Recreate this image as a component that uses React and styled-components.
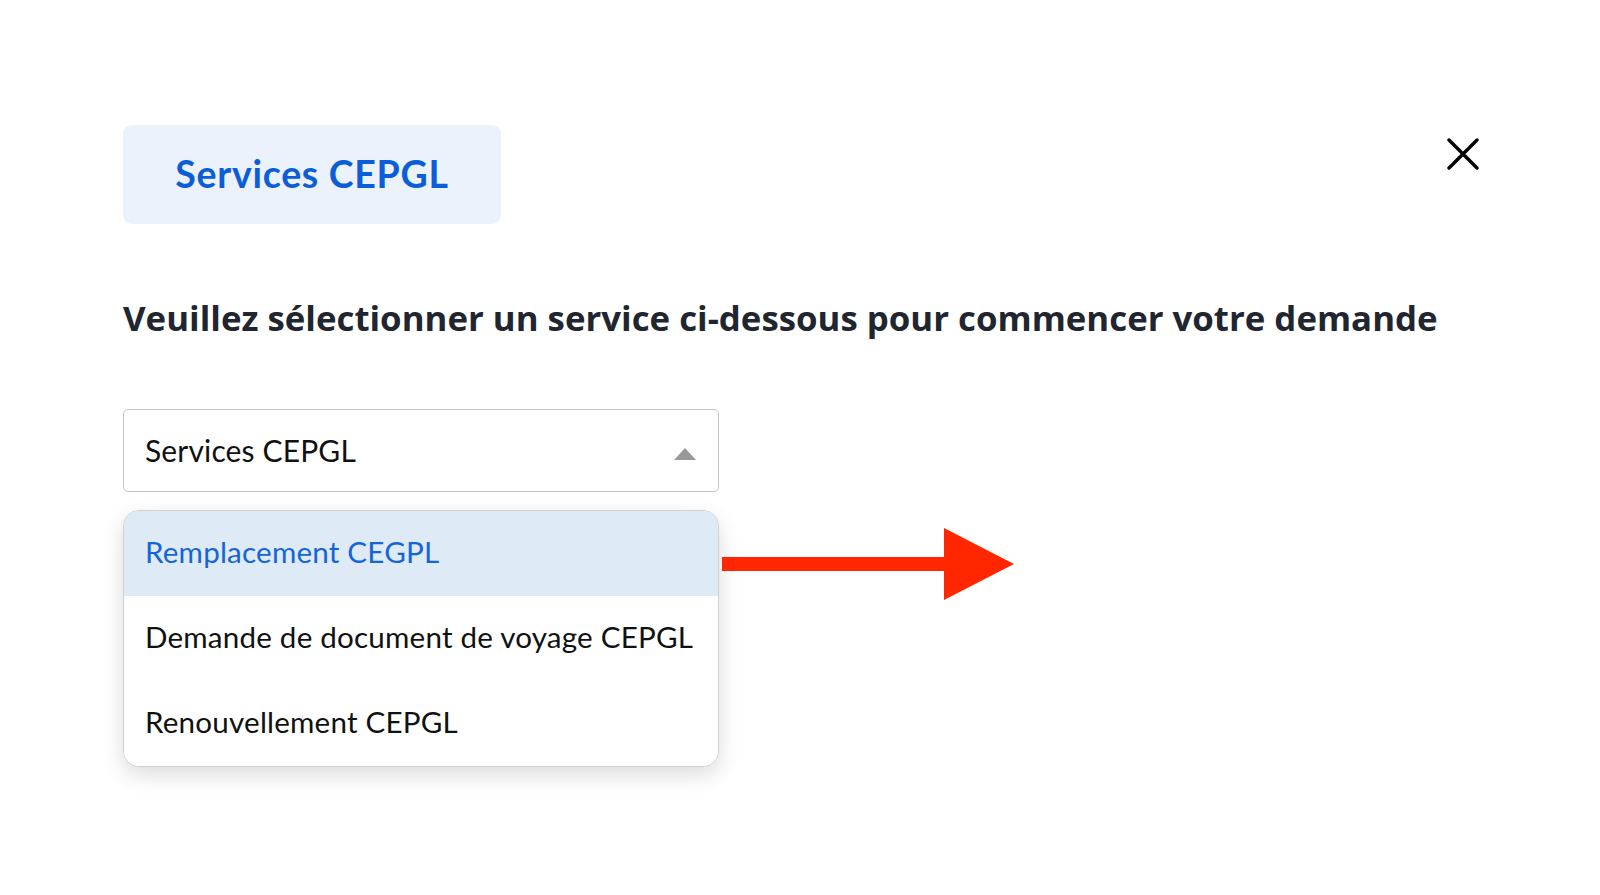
import React from 'react';
import styled, { createGlobalStyle } from 'styled-components';

const GlobalStyle = createGlobalStyle`
  html, body {
    margin: 0;
    padding: 0;
    background: #ffffff;
    font-family: Lato, "Open Sans", sans-serif;
  }
`;

const options = [
  { label: 'Remplacement CEGPL', active: true },
  { label: 'Demande de document de voyage CEPGL' },
  { label: 'Renouvellement CEPGL' },
];

const App = () => {
  return (
    <Page>
      <GlobalStyle />
      <Header>
        <Badge>Services CEPGL</Badge>
        <CloseButton aria-label="close">
          <svg width="32" height="32" viewBox="0 0 32 32">
            <path d="M2 2 L30 30 M30 2 L2 30" stroke="#000" strokeWidth="3.4" strokeLinecap="round" />
          </svg>
        </CloseButton>
      </Header>

      <Title>Veuillez sélectionner un service ci-dessous pour commencer votre demande</Title>

      <Select>
        <span>Services CEPGL</span>
        <Caret />
      </Select>

      <MenuRow>
        <Menu>
          {options.map((opt, index) => (
            <Option key={index} $active={opt.active}>
              {opt.label}
            </Option>
          ))}
        </Menu>
        <Arrow width="292" height="72" viewBox="0 0 292 72">
          <rect x="0" y="29" width="224" height="14" fill="#ff2600" />
          <polygon points="222,0 292,36 222,72" fill="#ff2600" />
        </Arrow>
      </MenuRow>
    </Page>
  );
};

export default App;

const Page = styled.div`
  width: 1600px;
  height: 895px;
  box-sizing: border-box;
  padding: 125px 121px 0 123px;
  overflow: hidden;
`;

const Header = styled.div`
  display: flex;
  justify-content: space-between;
  align-items: flex-start;
`;

const Badge = styled.div`
  width: 378px;
  height: 99px;
  box-sizing: border-box;
  padding-bottom: 3px;
  display: flex;
  align-items: center;
  justify-content: center;
  background: #ebf2fc;
  border-radius: 9px;
  color: #0b5ed7;
  font-size: 37.5px;
  font-weight: 700;
  letter-spacing: 0.7px;
`;

const CloseButton = styled.button`
  margin-top: 13px;
  padding: 0;
  border: none;
  background: none;
  width: 32px;
  height: 32px;
  cursor: pointer;
  svg {
    display: block;
  }
`;

const Title = styled.h1`
  margin: 72px 0 0;
  color: #1f2630;
  font-family: "Open Sans", Lato, sans-serif;
  font-size: 34.8px;
  font-weight: 700;
  line-height: 44px;
  white-space: nowrap;
`;

const Select = styled.div`
  margin-top: 69px;
  width: 596px;
  height: 83px;
  box-sizing: border-box;
  display: flex;
  align-items: center;
  justify-content: space-between;
  padding: 0 22px 2px 21px;
  border: 1.5px solid #c4c4c4;
  border-radius: 5px;
  color: #111;
  font-size: 30px;
  letter-spacing: 0.15px;
`;

const Caret = styled.div`
  width: 0;
  height: 0;
  margin-top: 8px;
  border-left: 11px solid transparent;
  border-right: 11px solid transparent;
  border-bottom: 12px solid #999;
`;

const MenuRow = styled.div`
  margin-top: 18px;
  display: flex;
  align-items: flex-start;
  gap: 3px;
`;

const Menu = styled.div`
  width: 596px;
  box-sizing: border-box;
  border: 1.5px solid #d0d0d0;
  border-radius: 16px;
  overflow: hidden;
  background: #fff;
  box-shadow: 0 8px 22px rgba(0, 0, 0, 0.14);
`;

const Option = styled.div`
  height: 85px;
  box-sizing: border-box;
  display: flex;
  align-items: center;
  padding: 0 21px 4px;
  font-size: 29.6px;
  letter-spacing: 0.2px;
  white-space: nowrap;
  color: ${(p) => (p.$active ? '#1565d8' : '#111')};
  background: ${(p) => (p.$active ? '#deebf7' : '#fff')};
`;

const Arrow = styled.svg`
  display: block;
  margin-top: 18px;
  flex-shrink: 0;
`;
